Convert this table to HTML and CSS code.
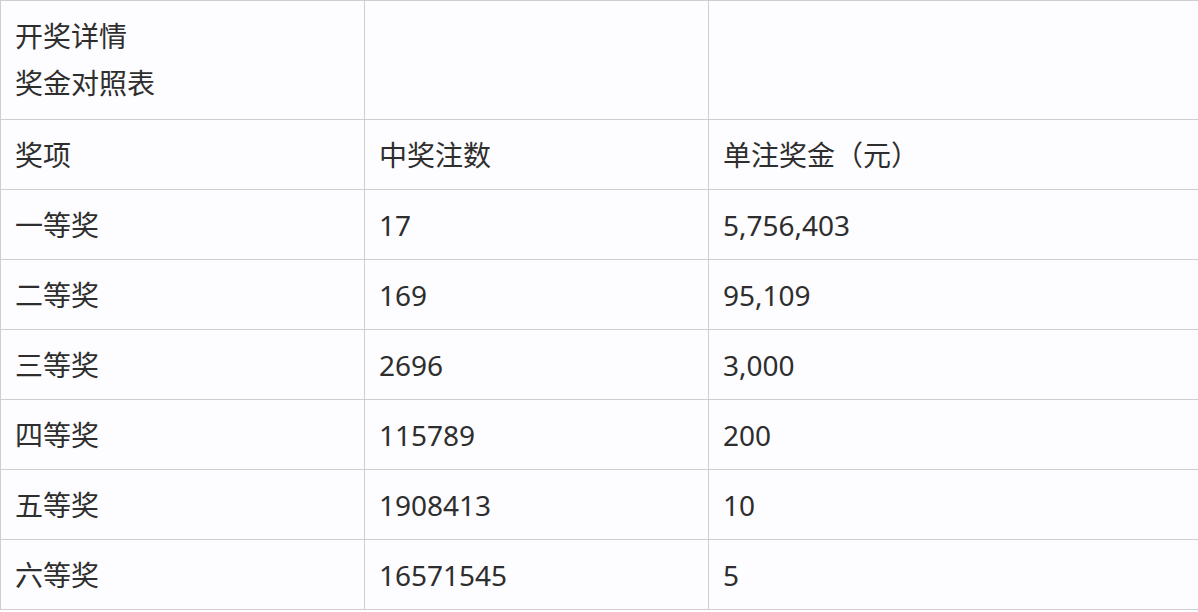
FILE: index.html
```html
<!DOCTYPE html>
<html lang="zh-CN">
<head>
<meta charset="utf-8">
<title>开奖详情</title>
<link rel="stylesheet" href="styles.css">
</head>
<body>
<table class="prize-table">
  <colgroup>
    <col class="col-a">
    <col class="col-b">
    <col class="col-c">
  </colgroup>
  <tr class="row-title">
    <td><div class="title-line">开奖详情</div><div class="title-line">奖金对照表</div></td>
    <td></td>
    <td></td>
  </tr>
  <tr><td>奖项</td><td>中奖注数</td><td>单注奖金（元）</td></tr>
  <tr><td>一等奖</td><td>17</td><td>5,756,403</td></tr>
  <tr><td>二等奖</td><td>169</td><td>95,109</td></tr>
  <tr><td>三等奖</td><td>2696</td><td>3,000</td></tr>
  <tr><td>四等奖</td><td>115789</td><td>200</td></tr>
  <tr><td>五等奖</td><td>1908413</td><td>10</td></tr>
  <tr><td>六等奖</td><td>16571545</td><td>5</td></tr>
</table>
</body>
</html>
```

FILE: styles.css
```css
html, body {
  margin: 0;
  padding: 0;
  background: #fdfcfe;
}
.prize-table {
  border-collapse: collapse;
  width: 1198px;
  table-layout: fixed;
  font-family: "Noto Sans", "Noto Sans CJK SC", sans-serif;
  font-size: 28px;
  color: #2e2e2e;
  background: #fdfcfe;
}
.col-a { width: 364px; }
.col-b { width: 344px; }
.col-c { width: 490px; }
.prize-table td {
  border: 1px solid #cfcfd1;
  padding: 0 0 0 14px;
  height: 69px;
  vertical-align: middle;
  line-height: 30px;
  white-space: nowrap;
}
.row-title td {
  height: 118px;
}
.title-line {
  line-height: 47px;
}
```
